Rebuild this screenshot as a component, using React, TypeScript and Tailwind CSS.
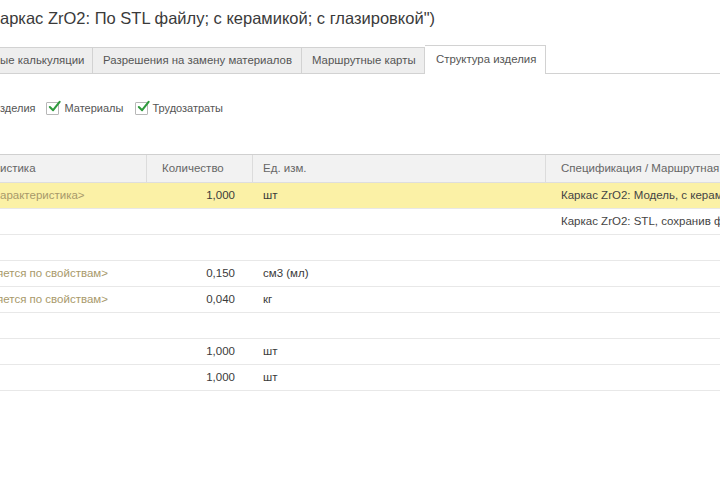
import React from "react";

type Row = { name?: string; qty?: string; unit?: string; spec?: string; hl?: boolean; indent?: number };

const ROWS: Row[] = [
  { name: "арактеристика>", qty: "1,000", unit: "шт", spec: "Каркас ZrO2: Модель, с керамикой", hl: true, indent: 0 },
  { spec: "Каркас ZrO2: STL, сохранив файл" },
  {},
  { name: "яется по свойствам>", qty: "0,150", unit: "см3 (мл)", indent: -3 },
  { name: "яется по свойствам>", qty: "0,040", unit: "кг", indent: -3 },
  {},
  { qty: "1,000", unit: "шт" },
  { qty: "1,000", unit: "шт" },
];

const TABS = [
  { label: "ые калькуляции", w: "w-[93px]", pad: "pl-0" },
  { label: "Разрешения на замену материалов", w: "w-[209px]", pad: "pl-[10px]" },
  { label: "Маршрутные карты", w: "w-[123px]", pad: "pl-[10px]" },
];

function Check() {
  return (
    <span className="relative inline-block w-[13px] h-[13px] border border-[#b8b8b8] bg-white rounded-[1px]">
      <svg viewBox="0 0 14 14" className="absolute -top-[3px] left-[1px] w-[13px] h-[13px]">
        <path d="M2 7.5 L5.5 11 L12.5 2" fill="none" stroke="#2e9a3c" strokeWidth="2.2" strokeLinecap="round" strokeLinejoin="round" />
      </svg>
    </span>
  );
}

export default function App() {
  return (
    <div
      className="w-[720px] h-[480px] overflow-hidden bg-white text-[#333]"
      style={{ fontFamily: '"Liberation Sans", Arial, sans-serif' }}
    >
      {/* Title */}
      <div className="h-[38px] pt-[9px] text-[16.5px] leading-[18px] text-[#3a3a3a] whitespace-nowrap">
        аркас ZrO2: По STL файлу; с керамикой; с глазировкой")
      </div>

      {/* Tabs */}
      <div className="flex items-end h-[36px] text-[11.4px] text-[#555] whitespace-nowrap">
        {TABS.map((t) => (
          <div
            key={t.label}
            className={`${t.w} ${t.pad} h-[27px] flex items-center bg-[#eeeeee] border-t border-r border-b border-[#d2d2d2]`}
          >
            {t.label}
          </div>
        ))}
        <div className="w-[121px] h-[29px] flex items-center pl-[11px] bg-white border-t border-r border-[#d2d2d2] text-[#555]">
          Структура изделия
        </div>
        <div className="flex-1 h-[27px] border-b border-[#d2d2d2]" />
      </div>

      {/* Checkboxes */}
      <div className="flex items-center h-[80px] pb-[12px] text-[11px] text-[#555] whitespace-nowrap">
        <span>зделия</span>
        <span className="ml-[10px] mr-[6px] flex"><Check /></span>
        <span>Материалы</span>
        <span className="ml-[12px] mr-[4px] flex"><Check /></span>
        <span>Трудозатраты</span>
      </div>

      {/* Table */}
      <div className="border-t border-[#d0d0d0] text-[11.5px] whitespace-nowrap">
        <div className="grid grid-cols-[147px_106px_293px_200px] h-[28px] items-center bg-[#f2f2f2] border-b border-[#dedede] text-[#666]">
          <div className="h-full flex items-center border-r border-[#dcdcdc]">истика</div>
          <div className="h-full flex items-center pl-[15px] border-r border-[#dcdcdc]">Количество</div>
          <div className="h-full flex items-center pl-[10px] border-r border-[#dcdcdc]">Ед. изм.</div>
          <div className="h-full flex items-center pl-[15px]">Спецификация / Маршрутная карта</div>
        </div>
        {ROWS.map((r, i) => (
          <div
            key={i}
            className={`grid grid-cols-[147px_106px_293px_200px] h-[26px] items-center border-b border-[#e8e8e8] ${
              r.hl ? "bg-[#fbf1a6]" : "bg-white"
            }`}
          >
            <div className={`overflow-hidden text-[#a8996a] ${r.indent === -3 ? "-ml-[3px]" : ""}`}>{r.name ?? ""}</div>
            <div className="text-right pr-[18px] text-[#3a3a3a]">{r.qty ?? ""}</div>
            <div className="pl-[10px] text-[#3a3a3a]">{r.unit ?? ""}</div>
            <div className="pl-[15px] text-[#444] overflow-hidden">{r.spec ?? ""}</div>
          </div>
        ))}
      </div>
    </div>
  );
}
